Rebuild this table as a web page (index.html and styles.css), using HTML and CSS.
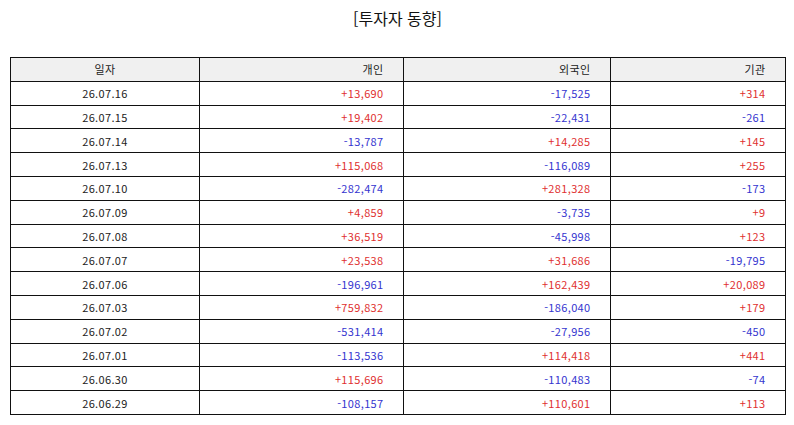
FILE: index.html
```html
<!DOCTYPE html>
<html lang="ko">
<head>
<meta charset="utf-8">
<link rel="stylesheet" href="styles.css">
</head>
<body>
<div class="page">
  <h1 class="title">[투자자 동향]</h1>
  <table class="grid">
    <colgroup>
      <col class="c1"><col class="c2"><col class="c3"><col class="c4">
    </colgroup>
    <thead>
      <tr><th class="date">일자</th><th>개인</th><th>외국인</th><th>기관</th></tr>
    </thead>
    <tbody>
      <tr><td class="date">26.07.16</td><td class="up">+13,690</td><td class="dn">-17,525</td><td class="up">+314</td></tr>
      <tr><td class="date">26.07.15</td><td class="up">+19,402</td><td class="dn">-22,431</td><td class="dn">-261</td></tr>
      <tr><td class="date">26.07.14</td><td class="dn">-13,787</td><td class="up">+14,285</td><td class="up">+145</td></tr>
      <tr><td class="date">26.07.13</td><td class="up">+115,068</td><td class="dn">-116,089</td><td class="up">+255</td></tr>
      <tr><td class="date">26.07.10</td><td class="dn">-282,474</td><td class="up">+281,328</td><td class="dn">-173</td></tr>
      <tr><td class="date">26.07.09</td><td class="up">+4,859</td><td class="dn">-3,735</td><td class="up">+9</td></tr>
      <tr><td class="date">26.07.08</td><td class="up">+36,519</td><td class="dn">-45,998</td><td class="up">+123</td></tr>
      <tr><td class="date">26.07.07</td><td class="up">+23,538</td><td class="up">+31,686</td><td class="dn">-19,795</td></tr>
      <tr><td class="date">26.07.06</td><td class="dn">-196,961</td><td class="up">+162,439</td><td class="up">+20,089</td></tr>
      <tr><td class="date">26.07.03</td><td class="up">+759,832</td><td class="dn">-186,040</td><td class="up">+179</td></tr>
      <tr><td class="date">26.07.02</td><td class="dn">-531,414</td><td class="dn">-27,956</td><td class="dn">-450</td></tr>
      <tr><td class="date">26.07.01</td><td class="dn">-113,536</td><td class="up">+114,418</td><td class="up">+441</td></tr>
      <tr><td class="date">26.06.30</td><td class="up">+115,696</td><td class="dn">-110,483</td><td class="dn">-74</td></tr>
      <tr><td class="date">26.06.29</td><td class="dn">-108,157</td><td class="up">+110,601</td><td class="up">+113</td></tr>
    </tbody>
  </table>
</div>
</body>
</html>
```
FILE: styles.css
```css
html, body {
  margin: 0;
  padding: 0;
  background: #ffffff;
}
body {
  font-family: "Noto Sans CJK KR", "Noto Sans", sans-serif;
  color: #222222;
}
.page {
  width: 794px;
  height: 425px;
  padding: 6px 0 0 10px;
  box-sizing: border-box;
}
.title {
  margin: 0;
  width: 775px;
  text-align: center;
  font-size: 16px;
  font-weight: normal;
  line-height: 24px;
  color: #111111;
}
.grid {
  margin-top: 27px;
  border-collapse: collapse;
  table-layout: fixed;
  width: 775px;
  font-size: 11px;
  letter-spacing: 0.35px;
}
.c1 { width: 189px; }
.c2 { width: 204px; }
.c3 { width: 207px; }
.c4 { width: 175px; }
.grid th,
.grid td {
  border: 1.3px solid #111111;
  height: 22.8px;
  padding: 0 19.5px 0 0;
  text-align: right;
  font-weight: normal;
  line-height: 14px;
  white-space: nowrap;
}
.grid th {
  background: #f0f0f0;
  color: #222222;
}
.grid .date {
  text-align: center;
  padding: 0;
}
.up { color: #e0302f; }
.dn { color: #3434cf; }
```
